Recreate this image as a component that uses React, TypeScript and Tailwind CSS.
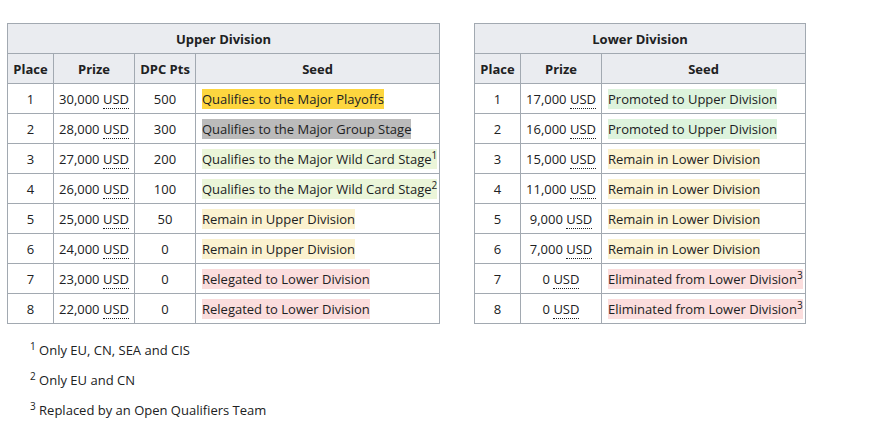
const upper = [
  { place: 1, prize: '30,000', pts: '500', seed: 'Qualifies to the Major Playoffs', bg: 'bg-[#fdd63f]', note: '' },
  { place: 2, prize: '28,000', pts: '300', seed: 'Qualifies to the Major Group Stage', bg: 'bg-[#bbbbbb]', note: '' },
  { place: 3, prize: '27,000', pts: '200', seed: 'Qualifies to the Major Wild Card Stage', bg: 'bg-[#ebf5d9]', note: '1' },
  { place: 4, prize: '26,000', pts: '100', seed: 'Qualifies to the Major Wild Card Stage', bg: 'bg-[#ebf5d9]', note: '2' },
  { place: 5, prize: '25,000', pts: '50', seed: 'Remain in Upper Division', bg: 'bg-[#fbf2d0]', note: '' },
  { place: 6, prize: '24,000', pts: '0', seed: 'Remain in Upper Division', bg: 'bg-[#fbf2d0]', note: '' },
  { place: 7, prize: '23,000', pts: '0', seed: 'Relegated to Lower Division', bg: 'bg-[#fbdddd]', note: '' },
  { place: 8, prize: '22,000', pts: '0', seed: 'Relegated to Lower Division', bg: 'bg-[#fbdddd]', note: '' }
]

const lower = [
  { place: 1, prize: '17,000', seed: 'Promoted to Upper Division', bg: 'bg-[#ddf3dd]', note: '' },
  { place: 2, prize: '16,000', seed: 'Promoted to Upper Division', bg: 'bg-[#ddf3dd]', note: '' },
  { place: 3, prize: '15,000', seed: 'Remain in Lower Division', bg: 'bg-[#fbf2d0]', note: '' },
  { place: 4, prize: '11,000', seed: 'Remain in Lower Division', bg: 'bg-[#fbf2d0]', note: '' },
  { place: 5, prize: '9,000', seed: 'Remain in Lower Division', bg: 'bg-[#fbf2d0]', note: '' },
  { place: 6, prize: '7,000', seed: 'Remain in Lower Division', bg: 'bg-[#fbf2d0]', note: '' },
  { place: 7, prize: '0', seed: 'Eliminated from Lower Division', bg: 'bg-[#fbdddd]', note: '3' },
  { place: 8, prize: '0', seed: 'Eliminated from Lower Division', bg: 'bg-[#fbdddd]', note: '3' }
]

const cell = 'h-[30px] border border-[#a2a9b1] p-0'
const head = 'h-[30px] border border-[#a2a9b1] bg-[#eaecf0] p-0 text-center font-bold'

const Usd = ({ amount }: { amount: string }) => (
  <span>
    {amount}{' '}
    <abbr className="border-b border-dotted border-[#202122]" style={{ textDecoration: 'none' }}>
      USD
    </abbr>
  </span>
)

const Seed = ({ text, bg, note }: { text: string; bg: string; note: string }) => (
  <td className={`${cell} pl-[6px] text-left`}>
    <span className={`${bg} py-[1px]`}>
      {text}
      {note && <sup className="relative -top-[5px] align-baseline text-[10px]">{note}</sup>}
    </span>
  </td>
)

export default function App() {
  return (
    <div className="min-h-[423px] bg-white pl-[7px] pt-[23px] text-[13px] leading-[18px] text-[#202122] [font-family:'Open_Sans',sans-serif]">
      <div className="flex items-start gap-[34px]">
        <table className="w-[433px] table-fixed border-collapse">
          <colgroup>
            <col className="w-[46px]" />
            <col className="w-[81px]" />
            <col className="w-[61px]" />
            <col />
          </colgroup>
          <thead>
            <tr>
              <th colSpan={4} className={head}>
                Upper Division
              </th>
            </tr>
            <tr>
              <th className={head}>Place</th>
              <th className={head}>Prize</th>
              <th className={head}>DPC Pts</th>
              <th className={head}>Seed</th>
            </tr>
          </thead>
          <tbody>
            {upper.map(r => (
              <tr key={r.place}>
                <td className={`${cell} text-center`}>{r.place}</td>
                <td className={`${cell} text-center`}>
                  <Usd amount={r.prize} />
                </td>
                <td className={`${cell} text-center`}>{r.pts}</td>
                <Seed text={r.seed} bg={r.bg} note={r.note} />
              </tr>
            ))}
          </tbody>
        </table>

        <table className="w-[332px] table-fixed border-collapse">
          <colgroup>
            <col className="w-[46px]" />
            <col className="w-[81px]" />
            <col />
          </colgroup>
          <thead>
            <tr>
              <th colSpan={3} className={head}>
                Lower Division
              </th>
            </tr>
            <tr>
              <th className={head}>Place</th>
              <th className={head}>Prize</th>
              <th className={head}>Seed</th>
            </tr>
          </thead>
          <tbody>
            {lower.map(r => (
              <tr key={r.place}>
                <td className={`${cell} text-center`}>{r.place}</td>
                <td className={`${cell} text-center`}>
                  <Usd amount={r.prize} />
                </td>
                <Seed text={r.seed} bg={r.bg} note={r.note} />
              </tr>
            ))}
          </tbody>
        </table>
      </div>

      <div className="mt-[17px] flex flex-col gap-[12px] pl-[23px]">
        <div>
          <sup className="relative -top-[5px] align-baseline text-[10px]">1</sup> Only EU, CN, SEA and CIS
        </div>
        <div>
          <sup className="relative -top-[5px] align-baseline text-[10px]">2</sup> Only EU and CN
        </div>
        <div>
          <sup className="relative -top-[5px] align-baseline text-[10px]">3</sup> Replaced by an Open Qualifiers Team
        </div>
      </div>
    </div>
  )
}
